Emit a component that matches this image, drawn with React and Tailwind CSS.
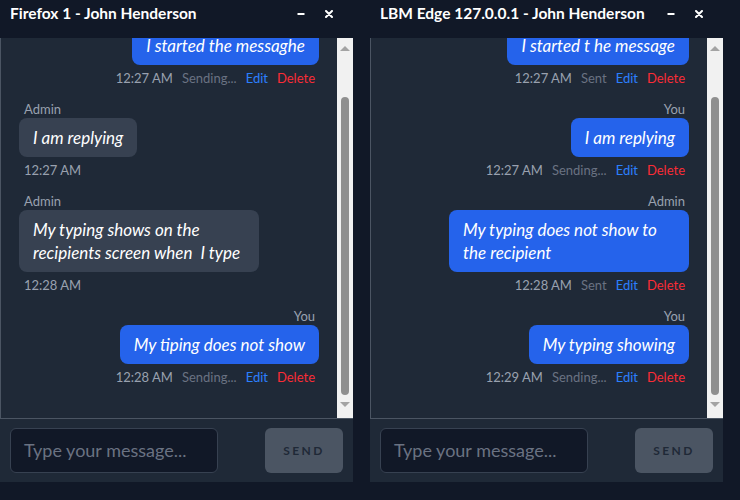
import React from "react";

const FONT = { fontFamily: "Lato, 'Noto Sans', 'Liberation Sans', sans-serif" };

function Meta({ time, status, own }) {
  return (
    <div className={`flex gap-[9px] px-1 text-[13px] leading-4 ${own ? "justify-end" : "justify-start pl-[5px]"}`}>
      <span className="text-gray-400">{time}</span>
      {own && <span className="text-gray-500">{status}</span>}
      {own && <span className="text-blue-500">Edit</span>}
      {own && <span className="text-red-500">Delete</span>}
    </div>
  );
}

function Message({ label, text, time, status, own }) {
  return (
    <div className={`flex flex-col ${own ? "items-end" : "items-start"}`}>
      {label && (
        <div className={`text-[13px] leading-4 text-gray-400 mb-px ${own ? "pr-1" : "pl-[5px]"}`}>{label}</div>
      )}
      <div
        className={`max-w-[240px] rounded-lg px-[14px] py-2 text-[17px] leading-[23px] italic text-white ${
          own ? "bg-[#2563eb]" : "bg-[#374151]"
        }`}
      >
        {text}
      </div>
      <div className="mt-[5px] self-stretch">
        <Meta time={time} status={status} own={own} />
      </div>
    </div>
  );
}

function Scrollbar() {
  return (
    <div className="w-4 shrink-0 bg-[#f1f1f1] flex flex-col items-center">
      <div className="mt-[8px] w-0 h-0 border-l-[5px] border-r-[5px] border-b-[5px] border-l-transparent border-r-transparent border-b-[#a3a3a3]" />
      <div className="mt-[46px] w-2 h-[298px] rounded-full bg-[#8f8f8f]" />
      <div className="mt-[7px] w-0 h-0 border-l-[5px] border-r-[5px] border-t-[5px] border-l-transparent border-r-transparent border-t-[#a3a3a3]" />
    </div>
  );
}

function ChatWindow({ title, messages }) {
  return (
    <div className="w-[353px] flex flex-col">
      <div className="h-7 flex items-center pl-[10px] pr-5 text-white">
        <span className="text-[15.5px] font-bold whitespace-nowrap">{title}</span>
        <svg className="ml-auto" width="8" height="8" viewBox="0 0 8 8">
          <line x1="0.5" y1="4" x2="7.5" y2="4" stroke="white" strokeWidth="2" />
        </svg>
        <svg className="ml-[20px]" width="8" height="8" viewBox="0 0 8 8">
          <path d="M1 1 L7 7 M7 1 L1 7" stroke="white" strokeWidth="2" strokeLinecap="round" />
        </svg>
      </div>
      <div className="mt-[10px] bg-[#1f2937] flex flex-col">
        <div className="h-[381px] flex border-l border-b border-[#4b5563]">
          <div className="flex-1 overflow-hidden flex flex-col justify-end gap-[15px] px-[18px] pb-[33px]">
            {messages.map((m, i) => (
              <Message key={i} {...m} />
            ))}
          </div>
          <Scrollbar />
        </div>
        <div className="h-[63px] flex items-center px-[10px]">
          <div className="w-[208px] h-[45px] rounded-md border border-[#374151] bg-[#111827] flex items-center px-[13px] text-[18px] text-gray-500">
            Type your message...
          </div>
          <div className="ml-auto w-[78px] h-[45px] rounded-md bg-[#4b5563] flex items-center justify-center text-[12px] font-bold tracking-[0.2em] text-[#1f2937]">
            SEND
          </div>
        </div>
      </div>
    </div>
  );
}

export default function App() {
  const left = [
    { label: "You", text: "I started the messaghe", time: "12:27 AM", status: "Sending...", own: true },
    { label: "Admin", text: "I am replying", time: "12:27 AM", own: false },
    { label: "Admin", text: "My typing shows on the recipients screen when\u00a0 I type", time: "12:28 AM", own: false },
    { label: "You", text: "My tiping does not show", time: "12:28 AM", status: "Sending...", own: true },
  ];
  const right = [
    { label: "You", text: "I started t he message", time: "12:27 AM", status: "Sent", own: true },
    { label: "You", text: "I am replying", time: "12:27 AM", status: "Sending...", own: true },
    { label: "Admin", text: "My typing does not show to the recipient", time: "12:28 AM", status: "Sent", own: true },
    { label: "You", text: "My typing showing", time: "12:29 AM", status: "Sending...", own: true },
  ];
  return (
    <div className="w-[740px] h-[500px] bg-[#111827] flex gap-[17px]" style={FONT}>
      <ChatWindow title="Firefox 1 - John Henderson" messages={left} />
      <ChatWindow title="LBM Edge 127.0.0.1 - John Henderson" messages={right} />
    </div>
  );
}
